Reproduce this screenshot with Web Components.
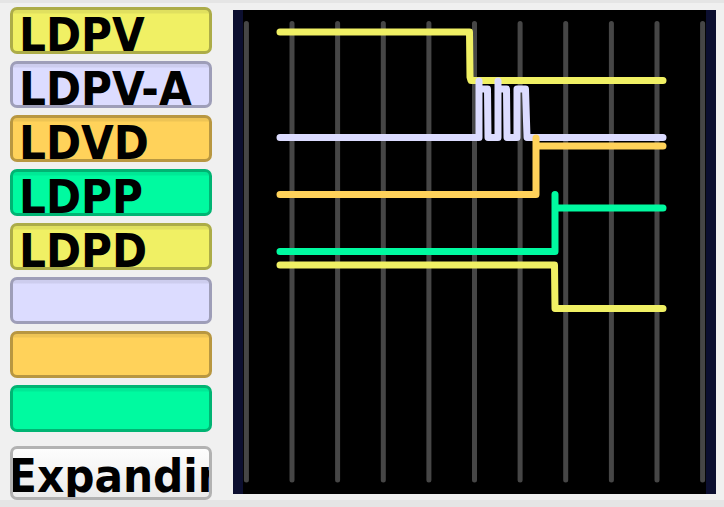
<!DOCTYPE html>
<html lang="en">
<head>
<meta charset="utf-8">
<title>Signal timing</title>
<style>
  html, body { margin: 0; height: 100%; background: #f0f0f0; }
</style>
</head>
<body>
<timing-panel>
  <signal-button slot="signals" tone="yellow">LDPV</signal-button>
  <signal-button slot="signals" tone="lilac">LDPV-A</signal-button>
  <signal-button slot="signals" tone="amber">LDVD</signal-button>
  <signal-button slot="signals" tone="green">LDPP</signal-button>
  <signal-button slot="signals" tone="yellow">LDPD</signal-button>
  <signal-button slot="signals" tone="lilac" label="Channel 6"></signal-button>
  <signal-button slot="signals" tone="amber" label="Channel 7"></signal-button>
  <signal-button slot="signals" tone="green" label="Channel 8"></signal-button>
  <mode-button slot="mode">Expanding</mode-button>
  <signal-plot slot="plot"></signal-plot>
</timing-panel>

<script>
const shadow = (host, html) => {
  const root = host.attachShadow({ mode: "open" });
  const t = document.createElement("template");
  t.innerHTML = html;
  root.append(t.content.cloneNode(true));
  return root;
};

customElements.define("timing-panel", class extends HTMLElement {
  constructor() {
    super();
    shadow(this, `
      <style>
        :host { display: flex; flex-direction: column; box-sizing: border-box; min-height: 100vh;
                background: #f0f0f0; border-top: 3px solid #e5e5e5; border-bottom: 7px solid #e5e5e5; }
        main { flex: 1; display: grid; grid-template-columns: 202fr 483fr; column-gap: 21px;
               padding: 4px 8px 0 10px; }
        aside { display: flex; flex-direction: column; min-width: 0; }
        .signals { display: flex; flex-direction: column; gap: 7px; }
        .mode { margin-top: 14px; }
        .plot { padding: 3px 0 6px; display: flex; min-width: 0; }
      </style>
      <main>
        <aside>
          <div class="signals"><slot name="signals"></slot></div>
          <div class="mode"><slot name="mode"></slot></div>
        </aside>
        <div class="plot"><slot name="plot"></slot></div>
      </main>`);
  }
});

customElements.define("signal-button", class extends HTMLElement {
  constructor() {
    super();
    const root = shadow(this, `
      <style>
        :host { display: block; --face: #f0f064; --shade: #e0e05f; --edge: #acac48; }
        :host([tone="lilac"]) { --face: #dcdcff; --shade: #cdcdee; --edge: #9e9eb8; }
        :host([tone="amber"]) { --face: #ffd25a; --shade: #eec454; --edge: #b89741; }
        :host([tone="green"]) { --face: #00faa0; --shade: #00e996; --edge: #00b473; }
        button { display: block; box-sizing: border-box; width: 100%; height: 47px; margin: 0;
                 padding: 0 0 0 6px; border: 3px solid var(--edge); border-radius: 7px; color: #000;
                 background: linear-gradient(var(--shade) 0 3px, var(--face) 4px);
                 font: bold 47px/50px "DejaVu Sans Condensed", "DejaVu Sans", sans-serif;
                 text-align: left; white-space: nowrap; overflow: hidden; }
      </style>
      <button type="button"><slot></slot></button>`);
    const label = this.getAttribute("label");
    if (label) root.querySelector("button").setAttribute("aria-label", label);
  }
});

customElements.define("mode-button", class extends HTMLElement {
  constructor() {
    super();
    shadow(this, `
      <style>
        :host { display: block; }
        button { display: block; box-sizing: border-box; width: 100%; height: 54px; margin: 0;
                 padding: 0; border: 3px solid #b2b2b2; border-radius: 7px; color: #000;
                 background: linear-gradient(#fdfdfd, #ebebeb);
                 font: bold 47px/54px "DejaVu Sans Condensed", "DejaVu Sans", sans-serif;
                 text-align: left; text-indent: -5px; white-space: nowrap; overflow: hidden; }
      </style>
      <button type="button"><slot></slot></button>`);
  }
});

customElements.define("signal-plot", class extends HTMLElement {
  constructor() {
    super();
    const grid = Array.from({ length: 11 }, (_, i) => {
      const x = 3.4 + i * 45.62;
      return `M${x.toFixed(1)} 13.5V470`;
    }).join("");
    shadow(this, `
      <style>
        :host { display: flex; flex: 1; min-width: 0; box-sizing: border-box; background: #000;
                border: solid #0c0f30; border-width: 0 10px; }
        svg { display: block; flex: 1; contain: size; }
        path { fill: none; stroke-linecap: round; stroke-linejoin: round; stroke-width: 7; }
        .grid { stroke: #464646; stroke-width: 5; }
      </style>
      <svg viewBox="0 0 463 484" preserveAspectRatio="none" role="img" aria-label="Signal traces over time">
        <path class="grid" d="${grid}"/>
        <path stroke="#f0f064" d="M37 22H226.500L227 67L228 70.500H420"/>
        <path stroke="#dcdcff" d="M37 127.500H236V71V79H244.500L245 127.500H255V71V79H263.500L264 127.500H274V79H282.500L284 127.500H420"/>
        <path stroke="#ffd25a" d="M37 184.500H293V128V136H420"/>
        <path stroke="#00faa0" d="M37 241.500H312V184.500V198H420"/>
        <path stroke="#f0f064" d="M37 255H311.500L312 298.500H420"/>
      </svg>`);
  }
});
</script>
</body>
</html>
